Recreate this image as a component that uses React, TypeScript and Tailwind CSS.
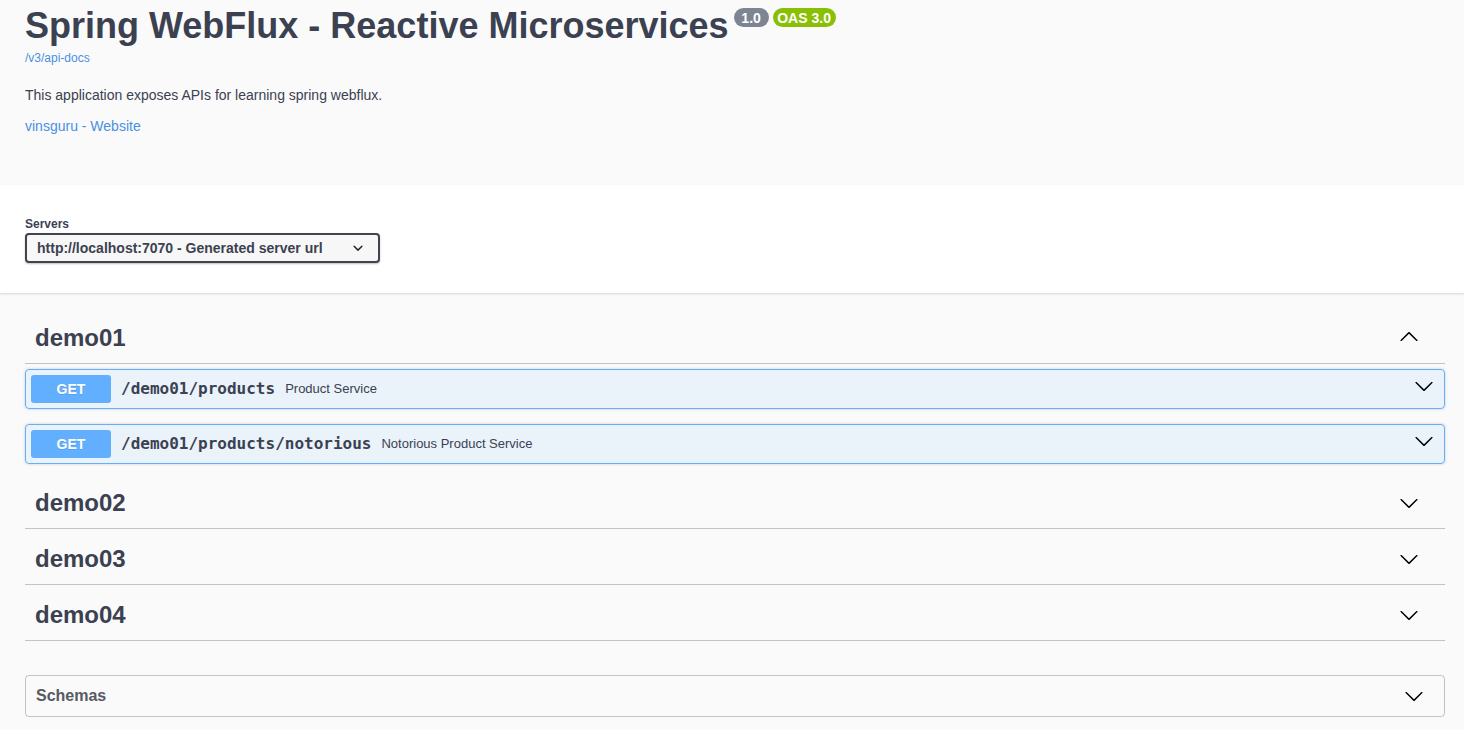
import React from 'react';

type Op = { path: string; summary: string };

const demo01Ops: Op[] = [
  { path: '/demo01/products', summary: 'Product Service' },
  { path: '/demo01/products/notorious', summary: 'Notorious Product Service' },
];

function ArrowDown({ className }: { className?: string }) {
  return (
    <svg viewBox="0 0 20 20" width="20" height="20" className={className}>
      <path d="M17.418 6.109c.272-.268.709-.268.979 0s.271.701 0 .969l-7.908 7.83c-.27.268-.707.268-.979 0l-7.908-7.83c-.27-.268-.27-.701 0-.969.271-.268.709-.268.979 0L10 13.25l7.418-7.141z" />
    </svg>
  );
}

function ArrowUp({ className }: { className?: string }) {
  return (
    <svg viewBox="0 0 20 20" width="20" height="20" className={className}>
      <path d="M17.418 14.908c.272.268.709.268.979 0s.271-.701 0-.969l-7.908-7.83c-.27-.268-.707-.268-.979 0l-7.908 7.83c-.27.268-.27.701 0 .969.271.268.709.268.979 0L10 7.767l7.418 7.141z" />
    </svg>
  );
}

function TagHeader({ name, open }: { name: string; open?: boolean }) {
  return (
    <div className="flex h-[51px] items-center justify-between border-b border-[#3b4151]/30 pl-[10px] pr-[26px]">
      <span className="text-[24px] font-bold leading-[30px]">{name}</span>
      {open ? <ArrowUp className="mb-[4px]" /> : <ArrowDown />}
    </div>
  );
}

function OpBlock({ op }: { op: Op }) {
  return (
    <div className="flex h-[40px] items-center rounded-[4px] border border-[#61affe] bg-[#61affe]/10 pl-[5px] pr-[10px] shadow-[0_0_3px_rgba(0,0,0,0.19)]">
      <span className="flex h-[28px] w-[80px] items-center justify-center rounded-[3px] bg-[#61affe] text-[14px] font-bold text-white [text-shadow:0_1px_0_rgba(0,0,0,0.1)]">
        GET
      </span>
      <span className="px-[10px] font-['DejaVu_Sans_Mono',monospace] text-[16px] font-bold">
        {op.path}
      </span>
      <span className="flex-1 text-[13px]">{op.summary}</span>
      <ArrowDown className="mb-[6px]" />
    </div>
  );
}

export default function App() {
  return (
    <div className="min-h-[730px] bg-[#fafafa] font-['Liberation_Sans',Arial,sans-serif] text-[#3b4151]">
      {/* info */}
      <div className="pb-[49px] pl-[25px] pr-[19px] pt-[4px]">
        <h2 className="flex items-start text-[36px] font-bold leading-[44px]">
          <span>Spring WebFlux - Reactive Microservices</span>
          <span className="ml-[5px] mt-[4px] flex gap-[4px]">
            <span className="flex h-[19px] w-[35px] items-center justify-center rounded-full bg-[#7d8492] text-[14px] leading-none text-white">
              1.0
            </span>
            <span className="flex h-[19px] w-[63px] items-center justify-center rounded-full bg-[#89bf04] text-[14px] leading-none text-white">
              OAS 3.0
            </span>
          </span>
        </h2>
        <div className="mt-[3px] text-[12px] leading-[15px] text-[#4990e2]">/v3/api-docs</div>
        <p className="mt-[19px] text-[14px] leading-[20px]">
          This application exposes APIs for learning spring webflux.
        </p>
        <div className="mt-[11px] text-[14px] leading-[20px] text-[#4990e2]">vinsguru - Website</div>
      </div>

      {/* servers */}
      <div className="bg-white pb-[30px] pl-[25px] pt-[30px] shadow-[0_1px_2px_0_rgba(0,0,0,0.15)]">
        <div className="pt-[2px] text-[12px] font-bold leading-[14px]">Servers</div>
        <div className="mt-[2px] flex h-[30px] w-[355px] items-center justify-between rounded-[4px] border-2 border-[#41444e] bg-[#f7f7f7] pl-[10px] pr-[10px] text-[14px] font-bold shadow-[0_1px_2px_0_rgba(0,0,0,0.25)]">
          <span>http://localhost:7070 - Generated server url</span>
          <svg viewBox="0 0 20 20" width="20" height="20">
            <path
              fill="#222"
              d="M13.418 7.859a.695.695 0 01.978 0 .68.68 0 010 .969l-3.908 3.83a.697.697 0 01-.979 0l-3.908-3.83a.68.68 0 010-.969.695.695 0 01.978 0L10 11l3.418-3.141z"
            />
          </svg>
        </div>
      </div>

      {/* operations */}
      <div className="flex flex-col pl-[25px] pr-[19px] pt-[20px]">
        <TagHeader name="demo01" open />
        <div className="mb-[14px] mt-[5px] flex flex-col gap-[15px]">
          {demo01Ops.map((op) => (
            <OpBlock key={op.path} op={op} />
          ))}
        </div>
        <div className="flex flex-col gap-[5px]">
          {['demo02', 'demo03', 'demo04'].map((t) => (
            <TagHeader key={t} name={t} />
          ))}
        </div>

        <div className="mt-[34px] flex h-[42px] items-center justify-between rounded-[4px] border border-[#3b4151]/30 pl-[10px] pr-[20px]">
          <span className="text-[16px] font-bold leading-[20px] text-[#555a63]">Schemas</span>
          <ArrowDown />
        </div>
      </div>
    </div>
  );
}
